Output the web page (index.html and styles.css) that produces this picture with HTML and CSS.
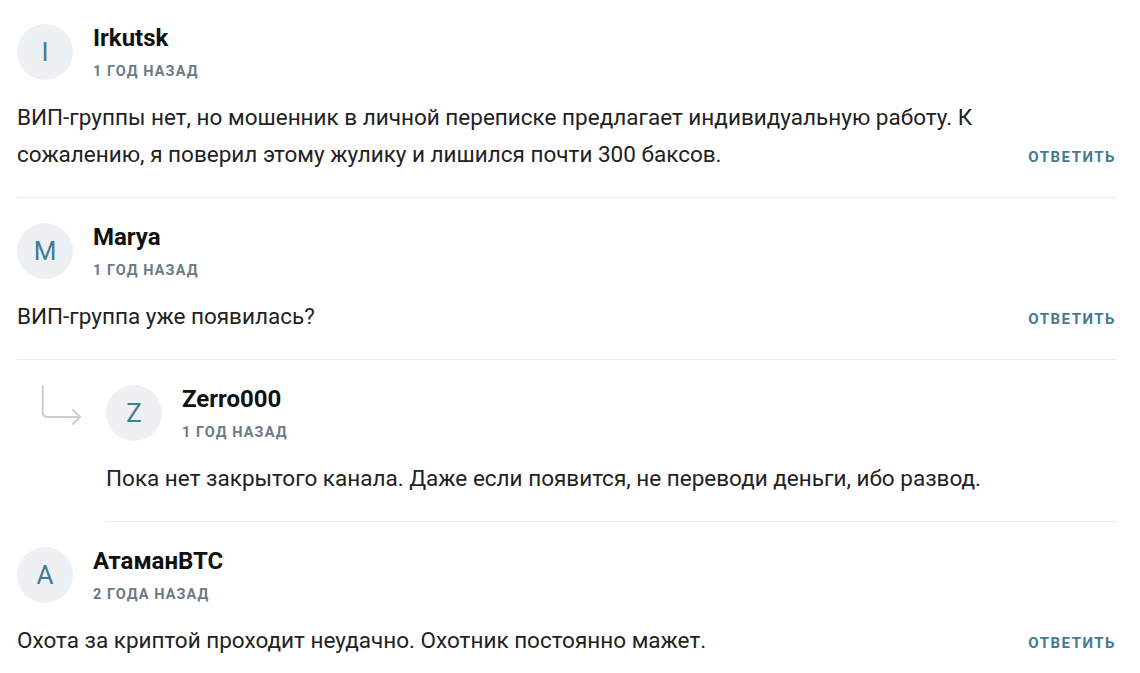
FILE: index.html
```html
<!DOCTYPE html>
<html lang="ru">
<head>
<meta charset="utf-8">
<link rel="stylesheet" href="styles.css">
</head>
<body>
<div class="list">
  <div class="comment">
    <div class="head">
      <div class="avatar">I</div>
      <div class="meta">
        <div class="name">Irkutsk</div>
        <div class="date">1 год назад</div>
      </div>
    </div>
    <div class="body">
      <p class="text">ВИП-группы нет, но мошенник в личной переписке предлагает индивидуальную работу. К сожалению, я поверил этому жулику и лишился почти 300 баксов.</p>
      <a class="reply-link">Ответить</a>
    </div>
  </div>
  <div class="comment">
    <div class="head">
      <div class="avatar">M</div>
      <div class="meta">
        <div class="name">Marya</div>
        <div class="date">1 год назад</div>
      </div>
    </div>
    <div class="body">
      <p class="text">ВИП-группа уже появилась?</p>
      <a class="reply-link">Ответить</a>
    </div>
  </div>
  <div class="thread">
    <div class="arrow">
      <svg width="44" height="42" viewBox="0 0 44 42" fill="none" stroke="#c9ced3" stroke-width="2" stroke-linecap="round" stroke-linejoin="round">
        <path d="M2.7 1 V27 Q2.7 32 7.7 32 H40"/>
        <path d="M33 25 L40 32 L33 39"/>
      </svg>
    </div>
    <div class="comment nested">
      <div class="head">
        <div class="avatar">Z</div>
        <div class="meta">
          <div class="name">Zerro000</div>
          <div class="date">1 год назад</div>
        </div>
      </div>
      <div class="body">
        <p class="text">Пока нет закрытого канала. Даже если появится, не переводи деньги, ибо развод.</p>
      </div>
    </div>
  </div>
  <div class="comment">
    <div class="head">
      <div class="avatar">A</div>
      <div class="meta">
        <div class="name">АтаманBTC</div>
        <div class="date">2 года назад</div>
      </div>
    </div>
    <div class="body">
      <p class="text">Охота за криптой проходит неудачно. Охотник постоянно мажет.</p>
      <a class="reply-link">Ответить</a>
    </div>
  </div>
</div>
</body>
</html>
```
FILE: styles.css
```css
html, body {
  margin: 0;
  padding: 0;
  background: #fff;
}
body {
  font-family: Roboto, "Noto Sans", Arial, sans-serif;
  color: #222;
}
.list {
  padding: 0 24px 0 17px;
}
.comment {
  padding: 25px 0 24px;
  border-bottom: 1px solid #e8ebee;
}
.list > .comment:first-child {
  padding-top: 24px;
}
.list > .comment:last-child {
  border-bottom: none;
}
.thread {
  display: flex;
}
.arrow {
  width: 89px;
  flex: none;
  padding: 25px 0 0 23px;
  box-sizing: border-box;
}
.arrow svg {
  display: block;
}
.nested {
  flex: 1;
}
.head {
  display: flex;
  gap: 20px;
  align-items: flex-start;
}
.avatar {
  width: 56px;
  height: 56px;
  border-radius: 50%;
  background: #edf1f4;
  color: #457a93;
  font-size: 26px;
  display: flex;
  align-items: center;
  justify-content: center;
  flex: none;
}
.name {
  font-size: 24px;
  font-weight: 700;
  line-height: 28px;
  color: #111;
}
.date {
  margin-top: 10px;
  font-size: 14.5px;
  line-height: 20px;
  font-weight: 700;
  text-transform: uppercase;
  letter-spacing: 1.1px;
  color: #6c7a86;
}
.body {
  display: flex;
  gap: 24px;
  align-items: last baseline;
  margin-top: 17px;
}
.text {
  flex: 1;
  margin: 0;
  font-size: 22.5px;
  line-height: 37px;
  color: #222;
}
.reply-link {
  font-size: 15px;
  font-weight: 700;
  text-transform: uppercase;
  letter-spacing: 1.5px;
  color: #457a93;
  cursor: pointer;
}
```
